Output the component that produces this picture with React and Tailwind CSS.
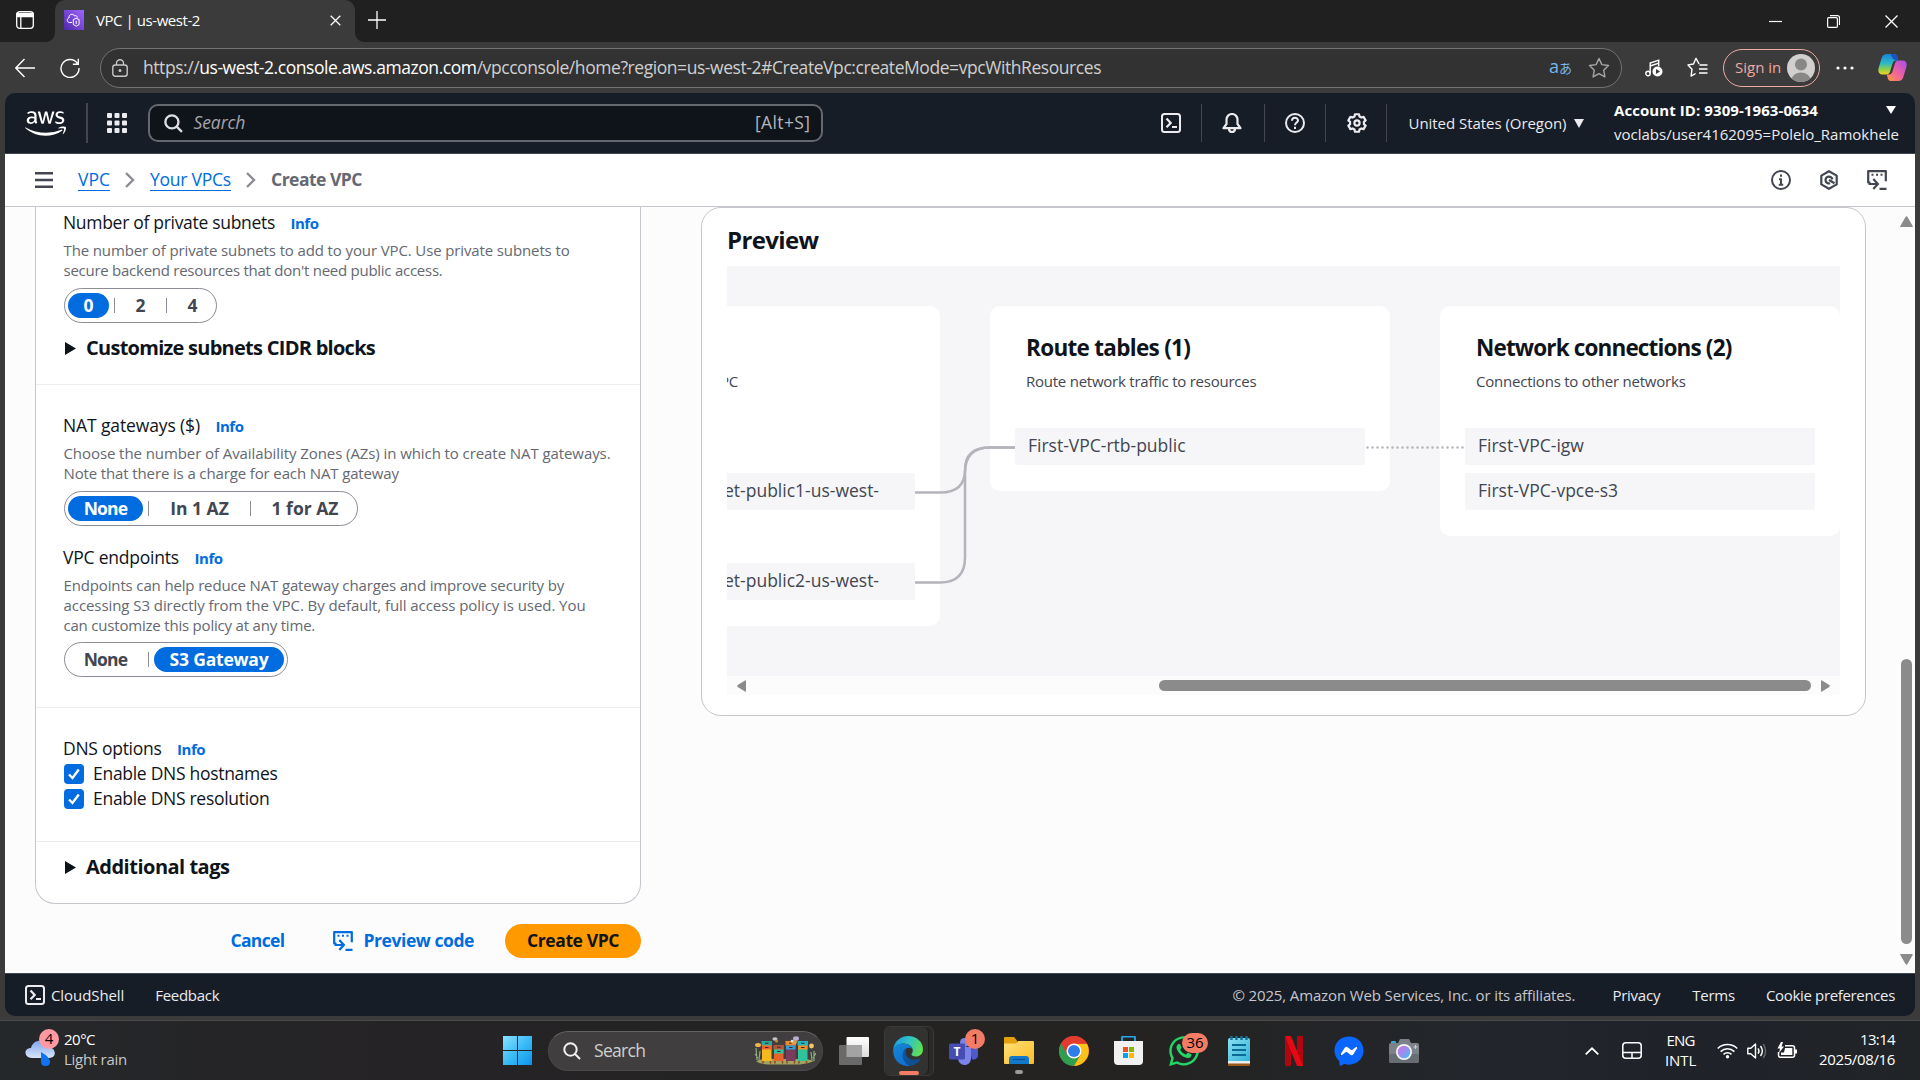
import { FaAws, FaWhatsapp, FaFacebookMessenger } from 'react-icons/fa';

/* ---------- shared icons ---------- */

function CodeDownIcon() {
  return (
    <svg width="20" height="20" viewBox="0 0 20 20" fill="none" stroke="currentColor" strokeWidth="2.2">
      <path d="M3.500 12.500H1.200V1.200h17.600v10" strokeLinejoin="round" />
      <path d="M4.500 4.800h2M9 4.800h2M13.500 4.800h2" strokeWidth="2" />
      <path d="M1.500 14h8.500M6.300 9l4.600 5-4.600 5M12.500 18.800h7" />
    </svg>
  );
}

function ShellIcon() {
  return (
    <svg width="20" height="20" viewBox="0 0 20 20" fill="none" stroke="currentColor" strokeWidth="2">
      <rect x="1" y="1" width="18" height="18" rx="2.5" />
      <path d="M5.500 5.500 9.700 10l-4.200 4.200M11 14h5" strokeWidth="2.200" />
    </svg>
  );
}

const GEAR = (() => {
  const pts = [];
  for (let k = 0; k < 6; k++) {
    const a = -90 + k * 60;
    [[-13, 9], [13, 9], [21, 7], [39, 7]].forEach(([d, r]) => {
      const t = ((a + d) * Math.PI) / 180;
      pts.push(`${(10 + r * Math.cos(t)).toFixed(2)} ${(10 + r * Math.sin(t)).toFixed(2)}`);
    });
  }
  return `M${pts.join('L')}Z`;
})();

function Magnifier({ size, width }) {
  return (
    <svg width={size} height={size} viewBox="0 0 18 18" fill="none" stroke="currentColor" strokeWidth={width}>
      <circle cx="7.500" cy="7.500" r="6.200" />
      <path d="m12 12 5 5" />
    </svg>
  );
}

/* ---------- browser chrome ---------- */

function TabStrip() {
  return (
    <div className="flex h-[42px] bg-[#202020] text-white">
      <div className="flex w-[55px] items-center pl-4 pb-[2px]">
        <svg width="18" height="18" viewBox="0 0 18 18" fill="none" stroke="#fff" strokeWidth="1.300">
          <rect x=".7" y=".7" width="16.600" height="16.600" rx="3" />
          <path d="M1 2.500h16v3H1z" fill="#fff" />
          <path d="M4.800 5v12" />
        </svg>
      </div>
      <div className="relative flex w-[300px] items-center rounded-t-[10px] bg-[#3b3b3b] pb-[2px] pl-[9px]">
        <svg className="absolute bottom-0 -left-[9px]" width="9" height="9"><path d="M9 0v9H0a9 9 0 0 0 9-9Z" fill="#3b3b3b" /></svg>
        <svg className="absolute bottom-0 -right-[9px]" width="9" height="9"><path d="M0 0v9h9a9 9 0 0 1-9-9Z" fill="#3b3b3b" /></svg>
        <svg width="20" height="20" viewBox="0 0 20 20" fill="none" stroke="#fff" strokeWidth="1">
          <defs><linearGradient id="vpc" x1="0" y1="1" x2="1" y2="0"><stop stopColor="#4d27aa" /><stop offset="1" stopColor="#a166ff" /></linearGradient></defs>
          <rect width="20" height="20" fill="url(#vpc)" stroke="none" />
          <path d="M8 12.500H5.200C2.700 12 2.600 8.500 5 8c-.4-4 4.200-5 5.500-2 1.700-1 2.900.2 2.600 1.800" />
          <path d="M9.300 9.500 12.200 8.300l2.900 1.200v5L12.200 16.200l-2.900-1.700zM12.200 10.800v3.200" />
        </svg>
        <span className="ml-3 w-[234px] text-[15px] leading-5 tracking-[-0.44px]">VPC | us-west-2</span>
        <svg width="11" height="11" viewBox="0 0 11 11" stroke="#fff" strokeWidth="1.300"><path d="m.7.7 9.600 9.600M10.300.7.700 10.300" /></svg>
      </div>
      <div className="flex flex-1 items-center pb-[2px] pl-[13px]">
        <svg width="18" height="18" viewBox="0 0 18 18" stroke="#fff" strokeWidth="1.300"><path d="M9 0v18M0 9h18" /></svg>
      </div>
      <div className="flex items-center gap-[45px] pr-[22px]">
        <svg width="13" height="13" viewBox="0 0 13 13" stroke="#fff" strokeWidth="1.200"><path d="M0 6.500h13" /></svg>
        <svg width="13" height="13" viewBox="0 0 13 13" fill="none" stroke="#fff" strokeWidth="1.200">
          <rect x=".6" y="2.600" width="9.800" height="9.800" rx="1.200" />
          <path d="M3 .6h7.500a2 2 0 0 1 2 2V10" />
        </svg>
        <svg width="13" height="13" viewBox="0 0 13 13" stroke="#fff" strokeWidth="1.300"><path d="m.5.5 12 12M12.500.5l-12 12" /></svg>
      </div>
    </div>
  );
}

function AddressBar() {
  return (
    <div className="flex h-[51px] items-center bg-[#3b3b3b] pl-[15px] pr-[13px] text-white">
      <svg width="20" height="20" viewBox="0 0 20 20" fill="none" stroke="#fff" strokeWidth="1.400"><path d="M20 10H1M9.500 1 .8 10l8.700 9" /></svg>
      <svg className="ml-[25px]" width="20" height="20" viewBox="0 0 20 20" fill="none" stroke="#fff" strokeWidth="1.400">
        <path d="M17.500 5.500A9 9 0 1 0 19 10M18.300.8v5.400h-5.400" />
      </svg>
      <div className="ml-5 flex h-10 w-[1522px] shrink-0 items-center rounded-full border border-[#737373] bg-[#323232] pl-[11px] pr-[11px]">
        <svg width="16" height="18" viewBox="0 0 16 18" fill="none" stroke="#c8c8c8" strokeWidth="1.400">
          <rect x=".8" y="6" width="14.400" height="11.200" rx="2.500" />
          <path d="M4.500 6V4.200a3.500 3.500 0 0 1 7 0V6" />
          <circle cx="8" cy="11.600" r=".8" fill="#c8c8c8" />
        </svg>
        <div className="-mt-px ml-[15px] flex-1 whitespace-nowrap text-[17.5px] leading-6 tracking-[-0.434px] text-[#cfcfcf]">
          https://<span className="text-white">us-west-2.console.aws.amazon.com</span>/vpcconsole/home?region=us-west-2#CreateVpc:createMode=vpcWithResources
        </div>
        <span className="-mt-px mr-[16px] flex items-baseline text-[18px] leading-6 text-[#76b9ed]">
          a<span className="font-['Noto_Sans_CJK_JP'] text-[13px]">あ</span>
        </span>
        <svg width="22" height="22" viewBox="0 0 22 22" fill="none" stroke="#a6a6a6" strokeWidth="1.400" strokeLinejoin="round">
          <path d="m11 1.500 2.900 6.100 6.600.9-4.800 4.700 1.200 6.700L11 16.700l-5.900 3.200 1.200-6.700L1.500 8.500l6.600-.9z" />
        </svg>
      </div>
      <svg className="ml-[23px]" width="18" height="18" viewBox="0 0 18 18" fill="none" stroke="#fff" strokeWidth="1.400">
        <circle cx="3" cy="14.500" r="2.200" />
        <path d="M5.200 14.500V4l8.500-2.800v6M5.200 7l8.500-2.800" />
        <circle cx="12.500" cy="12.500" r="5" fill="#fff" stroke="none" />
        <path d="m11 10 4 2.500-4 2.500z" fill="#3b3b3b" stroke="none" />
      </svg>
      <svg className="ml-[24px]" width="21" height="21" viewBox="0 0 21 21" fill="none" stroke="#fff" strokeWidth="1.400" strokeLinejoin="round">
        <path d="M12.500 6.500H11.800L9 1.300 6.500 7l-5.500.9 4 4.300-.9 6.900 4.500-2.600" />
        <path d="M12.500 8h8M12 12h8.500M12 16h8.500" />
      </svg>
      <div className="ml-[15px] flex h-[38px] w-[97px] shrink-0 items-center justify-between whitespace-nowrap rounded-full border-[1.5px] border-[#f0a8a2] pl-[11px] pr-1 text-[15px] text-[#f0a8a2]">
        Sign in
        <svg width="28" height="28" viewBox="0 0 28 28">
          <clipPath id="av"><circle cx="14" cy="14" r="14" /></clipPath>
          <g clipPath="url(#av)"><rect width="28" height="28" fill="#d2d0ce" /><circle cx="14" cy="10.500" r="6" fill="#8a8886" /><ellipse cx="14" cy="26" rx="9.500" ry="7.500" fill="#8a8886" /></g>
        </svg>
      </div>
      <svg className="ml-4" width="18" height="4" fill="#fff"><circle cx="2" cy="2" r="1.600" /><circle cx="9" cy="2" r="1.600" /><circle cx="16" cy="2" r="1.600" /></svg>
      <svg className="ml-6" width="29" height="27" viewBox="0 0 29 27">
        <defs>
          <linearGradient id="cpA" x1="0" y1="0" x2="0" y2="1"><stop stopColor="#1784d8" /><stop offset=".45" stopColor="#2bb8c8" /><stop offset=".75" stopColor="#8fd14a" /><stop offset="1" stopColor="#f4d125" /></linearGradient>
          <linearGradient id="cpB" x1="1" y1="0" x2="0" y2="1"><stop stopColor="#a04df0" /><stop offset=".5" stopColor="#ee5fa5" /><stop offset="1" stopColor="#ff9a3c" /></linearGradient>
        </defs>
        <path d="M9 0h7c2.500 0 3 2 3.600 4l.6 2.500h-2c-2.500 0-3.300 1.500-4 4l-2 6.500c-.6 2-1.500 3.500-4 3.500H4.500C1 20.500-.3 18 .6 14L3.500 4.500C4.300 1.500 6 0 9 0Z" fill="url(#cpA)" />
        <path d="M16 0c2.500 0 3 2 3.600 4l.6 2.500h-2L15 5 12.500 0z" fill="#1b53c4" />
        <path d="M20 27h-7c-2.500 0-3-2-3.600-4l-.6-2.500h2c2.500 0 3.300-1.500 4-4l2-6.500c.6-2 1.500-3.500 4-3.500h3.700c3.500 0 4.800 2.500 3.900 6.500L25.500 22.500c-.8 3-2.500 4.500-5.500 4.500Z" fill="url(#cpB)" />
      </svg>
    </div>
  );
}

/* ---------- AWS console ---------- */

function Rule() {
  return <div className="h-[38px] w-px bg-[#424650]" />;
}

function ConsoleHeader() {
  return (
    <div className="flex h-[61px] items-center border-b border-[#424650] bg-[#161d26] pl-5 pr-[14px] text-[#ebebf0]">
      <FaAws size={41} className="mt-px text-white" />
      <div className="ml-5 h-10 w-[1.5px] bg-[#424650]" />
      <svg className="ml-[19px]" width="20" height="20" fill="currentColor">
        {[0, 7.5, 15].map(y => [0, 7.5, 15].map(x => <rect key={`${x}-${y}`} x={x} y={y} width="5" height="5" rx="1" />))}
      </svg>
      <div className="ml-[21px] flex h-[38px] w-[675px] items-center justify-between rounded-[10px] border-2 border-[#656871] bg-[#0f141a] pl-[14px] pr-[10px] text-[17.5px] text-[#b4b4bb]">
        <div className="flex items-center gap-[11px]">
          <span className="text-[#dedee3]"><Magnifier size={19} width={2.2} /></span>
          <span className="-mt-px italic tracking-[-0.1px] text-[#a4a4ad]">Search</span>
        </div>
        <span className="-mt-px tracking-[0.4px]">[Alt+S]</span>
      </div>
      <div className="flex flex-1 items-center pl-[338px]">
        <ShellIcon />
        <div className="ml-5"><Rule /></div>
        <svg className="ml-5" width="20" height="20" viewBox="0 0 20 20" fill="none" stroke="currentColor" strokeWidth="2.200" strokeLinejoin="round">
          <path d="M1.500 15.200h17l-3-4.200V6.500a5 5 0 0 0-11 0V11z" />
          <path d="M7 15.500c0 4.700 6 4.700 6 0" />
        </svg>
        <div className="ml-[22px]"><Rule /></div>
        <svg className="ml-5" width="20" height="20" viewBox="0 0 20 20" fill="none" stroke="currentColor" strokeWidth="2">
          <circle cx="10" cy="10" r="9" />
          <path d="M7 7.800C7 3.800 13 4 13 7.500c0 2-3 2.200-3 4.700" />
          <path d="M10 13.800v2.200" />
        </svg>
        <div className="ml-5"><Rule /></div>
        <svg className="ml-[21px]" width="20" height="20" viewBox="0 0 20 20" fill="none" stroke="currentColor" strokeWidth="2.200" strokeLinejoin="round">
          <path d={GEAR} /><circle cx="10" cy="10" r="2.600" />
        </svg>
        <div className="ml-[19px]"><Rule /></div>
        <span className="ml-[22px] whitespace-nowrap text-[15px] tracking-[-0.042px]">United States (Oregon)</span>
        <svg className="ml-[7px]" width="10" height="9" fill="currentColor"><path d="M0 0h10L5 9z" /></svg>
      </div>
      <div className="-mt-[3px] w-[287px] text-[15px] leading-[24px] text-white">
        <div className="flex items-center justify-between pr-[5px]">
          <span className="font-bold tracking-[0.077px]">Account ID: 9309-1963-0634</span>
          <svg width="10" height="8" fill="currentColor"><path d="M0 0h10L5 8z" /></svg>
        </div>
        <div className="whitespace-nowrap text-[#ebebf0]">voclabs/user4162095=Polelo_Ramokhele</div>
      </div>
    </div>
  );
}

function Chevron() {
  return <svg width="10" height="16" viewBox="0 0 10 16" fill="none" stroke="#8c8c94" strokeWidth="2.400"><path d="m1 1 7 7-7 7" /></svg>;
}

function Breadcrumbs() {
  return (
    <div className="flex h-[53px] items-center border-b border-[#c6c6cd] bg-white pl-[30px] pr-[28px] text-[17.5px] text-[#424650]">
      <svg width="18" height="16" stroke="currentColor" strokeWidth="2.400"><path d="M0 1.200h18M0 8h18M0 14.800h18" /></svg>
      <div className="ml-[25px] flex flex-1 items-center gap-[15.5px] leading-[21px]">
        <span className="border-b border-[#006ce0] text-[#006ce0]">VPC</span>
        <Chevron />
        <span className="-ml-px border-b border-[#006ce0] tracking-[-0.23px] text-[#006ce0]">Your VPCs</span>
        <Chevron />
        <span className="-ml-px -mt-px font-bold tracking-[-0.5px] text-[#656871]">Create VPC</span>
      </div>
      <div className="flex items-center gap-7">
        <svg width="20" height="20" viewBox="0 0 20 20" fill="none" stroke="currentColor" strokeWidth="2">
          <circle cx="10" cy="10" r="9" /><path d="M10 8.500v6.500M8 9.300h2M7.800 14.700h4.400M10 4.600v2.200" />
        </svg>
        <svg width="20" height="20" viewBox="0 0 20 20" fill="none" stroke="currentColor" strokeWidth="2.200" strokeLinejoin="round">
          <path d="m10 1.200 7.700 4.400v8.800L10 18.800l-7.700-4.400V5.600z" />
          <path d="M11 13.200A3.400 3.400 0 1 1 13.300 9.500M10 10l5.500 3.200" />
        </svg>
        <CodeDownIcon />
      </div>
    </div>
  );
}

function Label({ children, className = '' }) {
  return (
    <div className="-ml-px flex h-6 items-center whitespace-nowrap pb-px text-[17.5px] text-[#0f141a]">
      <span className={className}>{children}</span>
      <span className="ml-[15.5px] mt-px text-[15px] font-bold tracking-[-0.48px] text-[#006ce0]">Info</span>
    </div>
  );
}

function Segments({ options, active, className = 'mt-2' }) {
  return (
    <div className={`${className} flex h-[35px] w-fit items-center rounded-full border border-[#8c8c94] px-[3px] text-[17.5px] font-bold leading-[24px] text-[#424650]`}>
      {options.map(([text, cls], i) => (
        <div key={text} className="flex items-center">
          {i > 0 && <div className="mx-[5px] h-[15px] w-px bg-[#8c8c94]" />}
          <div className={`h-[25px] rounded-full text-center ${cls} ${text === active ? 'bg-[#006ce0] text-white' : ''}`}>{text}</div>
        </div>
      ))}
    </div>
  );
}

function Disclosure({ children, className }) {
  return (
    <div className="flex h-6 items-center text-[20px] font-bold text-[#0f141a]">
      <svg className="ml-px" width="11" height="13" fill="currentColor"><path d="M0 0 11 6.500 0 13z" /></svg>
      <span className={`ml-[10px] whitespace-nowrap ${className}`}>{children}</span>
    </div>
  );
}

function Check({ children }) {
  return (
    <div className="flex h-[25px] items-center whitespace-nowrap text-[17.5px] text-[#0f141a]">
      <svg width="20" height="20" viewBox="0 0 20 20"><rect width="20" height="20" rx="4" fill="#006ce0" /><path d="m5 10.500 3.500 3.500 6.300-8.500" fill="none" stroke="#fff" strokeWidth="2.400" /></svg>
      <span className="ml-[9px] tracking-[-0.29px]">{children}</span>
    </div>
  );
}

function Form() {
  const help = '-ml-[0.5px] mt-[5px] whitespace-nowrap text-[15px] leading-5 text-[#656871]';
  return (
    <div className="ml-[30px] w-[606px] shrink-0">
      <div className="flex h-[697px] flex-col rounded-b-[20px] border border-t-0 border-[#c6c6cd] bg-white">
        <section className="h-[178px] border-b border-[#ebebf0] pl-7 pt-1">
          <Label className="tracking-[-0.303px]">Number of private subnets</Label>
          <div className={help}>
            <div className="tracking-[-0.122px]">The number of private subnets to add to your VPC. Use private subnets to</div>
            <div className="tracking-[-0.257px]">secure backend resources that don't need public access.</div>
          </div>
          <Segments options={[['0', 'w-[41px]'], ['2', 'w-[41px]'], ['4', 'w-[41px]']]} active="0" />
          <div className="mt-[13px]"><Disclosure className="tracking-[-0.733px]">Customize subnets CIDR blocks</Disclosure></div>
        </section>
        <section className="h-[323px] border-b border-[#ebebf0] pl-7 pt-[29px]">
          <Label className="tracking-[-0.124px]">NAT gateways ($)</Label>
          <div className={help}>
            <div className="tracking-[-0.079px]">Choose the number of Availability Zones (AZs) in which to create NAT gateways.</div>
            <div className="tracking-[-0.13px]">Note that there is a charge for each NAT gateway</div>
          </div>
          <Segments options={[['None', 'w-[75px] tracking-[-0.8px]'], ['In 1 AZ', 'w-[91px]'], ['1 for AZ', 'w-[98px]']]} active="None" />
          <div className="mt-5"><Label className="tracking-[-0.212px]">VPC endpoints</Label></div>
          <div className={help}>
            <div className="tracking-[-0.145px]">Endpoints can help reduce NAT gateway charges and improve security by</div>
            <div className="tracking-[-0.067px]">accessing S3 directly from the VPC. By default, full access policy is used. You</div>
            <div className="tracking-[-0.2px]">can customize this policy at any time.</div>
          </div>
          <Segments className="mt-[7px]" options={[['None', 'w-[75px] tracking-[-0.8px]'], ['S3 Gateway', 'w-[130px] tracking-[-0.2px]']]} active="S3 Gateway" />
        </section>
        <section className="h-[134px] border-b border-[#ebebf0] pl-7 pt-[29px]">
          <Label className="tracking-[-0.27px]">DNS options</Label>
          <Check>Enable DNS hostnames</Check>
          <Check>Enable DNS resolution</Check>
        </section>
        <section className="pl-7 pt-[13px]">
          <Disclosure className="tracking-[-0.5px]">Additional tags</Disclosure>
        </section>
      </div>
      <div className="mt-5 flex h-[34px] items-center justify-end whitespace-nowrap text-[17.5px] font-bold text-[#006ce0]">
        <span className="-mt-px tracking-[-0.65px]">Cancel</span>
        <span className="ml-[49px]"><CodeDownIcon /></span>
        <span className="-mt-px ml-[10px] tracking-[-0.43px]">Preview code</span>
        <span className="ml-[31px] h-[34px] w-[136px] rounded-full bg-[#ff9900] text-center leading-[33px] tracking-[-0.4px] text-[#0f141a]">Create VPC</span>
      </div>
    </div>
  );
}

function Resource({ children, className = '' }) {
  return <div className={`mx-[25px] h-[37px] whitespace-nowrap rounded-[2px] bg-[#f6f6f9] px-[13px] text-[17.5px] leading-[35px] text-[#424650] ${className}`}>{children}</div>;
}

function Column({ title, note, titleClass, noteClass, children, className }) {
  return (
    <div className={`w-[400px] shrink-0 rounded-[10px] bg-white pt-[26px] ${className}`}>
      <div className={`ml-9 h-[30px] text-[22.5px] font-bold leading-[31px] text-[#0f141a] ${titleClass}`}>{title}</div>
      <div className={`ml-9 mt-[10px] h-5 text-[15px] leading-[18px] text-[#424650] ${noteClass}`}>{note}</div>
      <div className="mt-9 flex flex-col gap-2">{children}</div>
    </div>
  );
}

function Preview() {
  return (
    <div className="ml-[60px] h-[509px] w-[1165px] shrink-0 rounded-[20px] border border-[#c6c6cd] bg-white pl-[25px] pr-[25px]">
      <div className="h-[58px] pt-[15px] text-[24px] font-bold leading-[34px] tracking-[-0.65px] text-[#0f141a]">Preview</div>
      <div className="relative h-[410px] overflow-hidden bg-[#f6f6f9] pt-10">
        <div className="-ml-[187px] flex items-start gap-[50px]">
          <Column className="h-[320px]" note="VPC" noteClass="w-[162px] text-right tracking-[-0.25px]">
            <div className="h-[37px]" />
            <Resource className="pr-9 text-right">et-public1-us-west-</Resource>
            <div className="h-[37px]" />
            <Resource className="pr-9 text-right">et-public2-us-west-</Resource>
          </Column>
          <Column className="h-[185px]" title="Route tables (1)" titleClass="tracking-[-0.7px]" note="Route network traffic to resources" noteClass="tracking-[-0.24px]">
            <Resource>First-VPC-rtb-public</Resource>
          </Column>
          <Column className="h-[230px]" title="Network connections (2)" titleClass="tracking-[-0.85px]" note="Connections to other networks" noteClass="tracking-[-0.22px]">
            <Resource>First-VPC-igw</Resource>
            <Resource>First-VPC-vpce-s3</Resource>
          </Column>
        </div>
        <svg className="absolute left-0 top-0" width="1113" height="410" fill="none" stroke="#b4b4bb" strokeWidth="2.500">
          <path d="M188 226.500h25q25 0 25-22.500t25-22.500h25" />
          <path d="M188 316.500h25q25 0 25-25v-85q0-25 25-25h25" />
          <path d="M640.500 181.500H738" strokeDasharray="0 5" strokeLinecap="round" />
        </svg>
      </div>
      <div className="flex h-[19px] items-center bg-[#fcfcfc] px-[10px]">
        <svg width="9" height="12" fill="#8b8b8b"><path d="M9 1v10q0 1-1 .6L.7 7Q-.2 6 .7 5L8 .4Q9 0 9 1Z" /></svg>
        <div className="ml-[413px] h-[11px] w-[652px] rounded-full bg-[#8b8b8b]" />
        <svg className="ml-[10px]" width="9" height="12" fill="#8b8b8b"><path d="M0 1v10q0 1 1 .6L8.300 7q.9-1 0-2L1 .4Q0 0 0 1Z" /></svg>
      </div>
    </div>
  );
}

function ConsoleFooter() {
  return (
    <div className="flex h-[43px] items-center whitespace-nowrap border-t border-[#424650] bg-[#161d26] pb-px pl-5 pr-5 text-[15px] leading-5 text-[#ebebf0]">
      <span className="mt-px"><ShellIcon /></span>
      <span className="ml-[6px] tracking-[-0.08px]">CloudShell</span>
      <span className="ml-[31px] flex-1 tracking-[-0.293px]">Feedback</span>
      <span className="tracking-[-0.132px] text-[#c6c6cd]">© 2025, Amazon Web Services, Inc. or its affiliates.</span>
      <span className="ml-[37px] tracking-[-0.25px]">Privacy</span>
      <span className="ml-8 tracking-[-0.2px]">Terms</span>
      <span className="ml-[31px] tracking-[-0.344px]">Cookie preferences</span>
    </div>
  );
}

/* ---------- Windows taskbar ---------- */

function Hives() {
  const hives = [[8, 4, '#2aa5a0', '#f0622d', '#f6b81f'], [20, 8, '#b0563c', '#2ec4a0', '#e8632a'], [32, 4, '#f08a2a', '#38a0d0', '#7a3b5e'], [44, 4, '#26b5c4', '#f28c28', '#2fc39b']];
  return (
    <svg width="62" height="30" viewBox="0 0 62 30">
      <path d="M2 25q8-3 20-2h24q10 0 14 2-6 3-14 3.500H14Q5 28 2 25Z" fill="#a3a35f" />
      <path d="M3 24 2 12M5 24l1-9M58 24l-1-8M60 25V15M4 22l-3-4M59 22l3-5" stroke="#8fae7a" strokeWidth="1.200" />
      <ellipse cx="4" cy="9" rx="3" ry="2" fill="#f0b44a" /><circle cx="57.500" cy="10" r="2.400" fill="#f5c86a" />
      {hives.map(([x, y, a, b, c]) => (
        <g key={x}>
          <rect x={x} y={y + 2} width="9.500" height={23 - y} fill={c} />
          <rect x={x - 0.5} y={y + 1} width="10.500" height="4.500" fill={a} />
          <rect x={x} y={y + 5.5} width="9.500" height="4" fill={b} />
          <path d={`M${x + 3} ${y + 3.2}h3.5M${x + 3} ${y + 7.5}h3.5`} stroke="#3b2b20" strokeWidth="1" />
          <path d={`M${x + 1} 25v2.5M${x + 8.5} 25v2.5`} stroke="#8a4b22" strokeWidth="1.500" />
        </g>
      ))}
      <ellipse cx="21" cy="3" rx="2.600" ry="1.700" fill="#c9c6cc" /><circle cx="22.500" cy="5" r="1.500" fill="#c98b3a" />
      <ellipse cx="42" cy="2.500" rx="3" ry="2.300" fill="#b9aed2" /><ellipse cx="40" cy="6" rx="3" ry="2" fill="#e0a04a" /><circle cx="38" cy="5" r="1.300" fill="#e9e4ef" />
    </svg>
  );
}

function EdgeIcon() {
  return (
    <svg width="30" height="30" viewBox="0 0 30 30">
      <defs>
        <linearGradient id="eg1" x1="0" y1=".3" x2="1" y2=".6"><stop stopColor="#1d9ddb" /><stop offset=".45" stopColor="#30c2c9" /><stop offset="1" stopColor="#62e04c" /></linearGradient>
        <linearGradient id="eg2" x1="0" y1="0" x2=".6" y2="1"><stop stopColor="#1587d6" /><stop offset="1" stopColor="#0f6fd0" /></linearGradient>
        <linearGradient id="eg3" x1="0" y1="0" x2="1" y2="1"><stop stopColor="#0c59a4" /><stop offset="1" stopColor="#114a8b" /></linearGradient>
      </defs>
      <path d="M.3 13C1.200 5.500 7.500 0 15 0c8.500 0 15 6 15 13.200 0 5-3.600 7.300-7 7.300-3.200 0-4.600-1.300-4.600-2.200 0-.8 1.400-1.200 1.400-3.800C19.800 10.500 15.500 7.500 10.500 7.500 6 7.500 2 10 .3 13Z" fill="url(#eg1)" />
      <path d="M.3 13C1.500 9.500 5.500 7.300 10.500 7.500c4.500.2 8 2.500 9 5.300C17 11 12.500 11.500 10.800 15c-2 5 .8 12 6.700 14.800C8 31.500-1 24 .3 13Z" fill="url(#eg2)" />
      <path d="M13.500 12.600C9 15.500 8.500 21 11.500 25.500c2 3 4.800 4.200 6.800 4.200 3.800-.6 7.200-3 9.200-6.200.4-.7 0-1-.6-.7C21 25.500 13 23 12.800 16.500c0-1.600.2-2.800.7-3.900Z" fill="url(#eg3)" />
    </svg>
  );
}

function TeamsIcon() {
  return (
    <svg width="30" height="28" viewBox="0 0 30 28">
      <circle cx="15.500" cy="5.500" r="4.500" fill="#7b83eb" />
      <path d="M20 10h9v8c0 3.500-3 5-6 4.500z" fill="#5059c9" />
      <path d="M9 10h13v11c0 4.500-3 7-6.500 7S9 25 9 21z" fill="#7b83eb" />
      <rect y="6.500" width="16" height="16" rx="1.500" fill="#454db3" />
      <text x="8" y="19" textAnchor="middle" fontSize="12" fontWeight="700" fill="#fff">T</text>
    </svg>
  );
}

function ChromeIcon() {
  return (
    <svg width="30" height="30" viewBox="0 0 30 30">
      <circle cx="15" cy="15" r="15" fill="#ea4335" />
      <path d="M2 7.500A15 15 0 0 0 15 30l6.500-11.500L15 15Z" fill="#2f9e4f" />
      <path d="M15 30A15 15 0 0 0 28 7.800H15L21.500 19Z" fill="#fbc116" />
      <path d="M2 7.500 8.500 18.700 15 15V7.800H28A15 15 0 0 0 2 7.500Z" fill="#e33b2e" />
      <circle cx="15" cy="15" r="7.500" fill="#fff" /><circle cx="15" cy="15" r="6" fill="#2f7de9" />
    </svg>
  );
}

function Badge({ children, className }) {
  return <span className={`absolute h-5 rounded-full text-center text-[15px] leading-[19px] text-black ${className}`}>{children}</span>;
}

function Taskbar() {
  return (
    <div className="flex h-[60px] items-center border-t border-[#4b4b4b] bg-[linear-gradient(90deg,#25282a,#252326_20%,#242322_45%,#242322_60%,#23262b_76%,#20222a_88%,#212427)] text-white">
      <div className="relative ml-[25px] flex w-[478px] items-center">
        <svg className="mt-1" width="30" height="28" viewBox="0 0 30 28">
          <defs><linearGradient id="cl" x1="0" y1="0" x2="0" y2="1"><stop stopColor="#7ea6ee" /><stop offset="1" stopColor="#d9e5fa" /></linearGradient></defs>
          <path d="M7 19C-1 19-2 9 6 9 8 0 20-1 22 8c9-1 11 11 2 11Z" fill="url(#cl)" />
          <path d="M16 13q9 5 9 10 0 4-4.500 4T16 23Z" fill="#1273f0" />
        </svg>
        <Badge className="-top-[3px] left-[14px] w-5 bg-[#ff99a4]">4</Badge>
        <div className="-mt-[3px] ml-[9px] text-[15px] leading-5">
          <div className="tracking-[-0.5px]">20°C</div>
          <div className="tracking-[-0.265px] text-[#c8c8c8]">Light rain</div>
        </div>
      </div>
      <svg width="29" height="29" viewBox="0 0 29 29">
        <defs><linearGradient id="win" x1="0" y1="0" x2="1" y2="1"><stop stopColor="#8ae2ff" /><stop offset=".5" stopColor="#3cbcf5" /><stop offset="1" stopColor="#0a93ee" /></linearGradient></defs>
        <path d="M0 0h14v14H0zM15 0h14v14H15zM0 15h14v14H0zM15 15h14v14H15z" fill="url(#win)" />
      </svg>
      <div className="ml-4 flex h-10 w-[275px] items-center rounded-full border border-[#4a4949] border-t-[#646363] bg-[#403e3e] pl-[14px] pr-1.5 text-[17.5px] text-[#d0d0d0]">
        <span className="text-[#f2f2f2]"><Magnifier size={18} width={2} /></span>
        <span className="ml-[13px] flex-1 tracking-[-0.7px]">Search</span>
        <Hives />
      </div>
      <svg className="ml-4" width="30" height="28" viewBox="0 0 30 28">
        <defs><linearGradient id="tv" x1="0" y1="0" x2="0" y2="1"><stop stopColor="#fff" /><stop offset="1" stopColor="#dcdcdc" /></linearGradient></defs>
        <rect x="7.500" width="22.500" height="20" rx="1" fill="url(#tv)" />
        <path d="M0 9q0-1 1-1h21q1 0 1 1v18q0 1-1 1H1q-1 0-1-1Z" fill="#6a6a6a" />
        <path d="M7.500 8H22q1 0 1 1v11H7.500Z" fill="#a3a3a3" />
      </svg>
      <div className="ml-[15px] flex h-[50px] w-[50px] rounded-[6px] border border-[#3a3a39] bg-[#292928]">
        <div className="relative flex h-[48px] w-11 flex-col items-center rounded-[6px] border-r border-[#1c1c1b] bg-[#323231] pl-[2px] pt-[9px]">
          <EdgeIcon />
          <div className="absolute bottom-0 left-[14px] h-1 w-5 rounded-full bg-[#f47c64]" />
        </div>
      </div>
      <div className="relative ml-[15px]"><TeamsIcon /><Badge className="-right-[6px] -top-2 w-5 bg-[#f47c64]">1</Badge></div>
      <div className="relative ml-[25px]">
        <svg width="30" height="27" viewBox="0 0 30 27">
          <defs><linearGradient id="fd" x1="0" y1="0" x2="1" y2="1"><stop stopColor="#ffe07a" /><stop offset="1" stopColor="#fdbd23" /></linearGradient></defs>
          <path d="M0 1q0-1 1-1h9l3 3.500V9H0Z" fill="#e5a00d" />
          <path d="M0 6.500h12l2-2.500h15q1 0 1 1v21q0 1-1 1H1q-1 0-1-1Z" fill="url(#fd)" />
          <path d="M5 27v-5q0-3 3-3h14q3 0 3 3v5Z" fill="#1278cc" /><path d="M9 22.500h12" stroke="#0a4f92" strokeWidth="1.200" />
        </svg>
        <div className="absolute -bottom-[10px] left-[11px] h-1 w-2 rounded-full bg-[#9a9a9a]" />
      </div>
      <div className="ml-[25px]"><ChromeIcon /></div>
      <svg className="ml-[25px]" width="29" height="29" viewBox="0 0 29 29">
        <path d="M8 6V1.500q0-.8.800-.8h11.400q.8 0 .8.800V6" fill="none" stroke="#28a8ea" strokeWidth="1.800" />
        <path d="M0 5h29v20q0 4-4 4H4q-4 0-4-4Z" fill="#f1f1f1" />
        <path d="M9 11h5v5H9z" fill="#f25022" /><path d="M15 11h5v5h-5z" fill="#7fba00" /><path d="M9 17h5v5H9z" fill="#00a4ef" /><path d="M15 17h5v5h-5z" fill="#ffb900" />
      </svg>
      <div className="relative ml-[24px]"><FaWhatsapp size={34} className="text-[#25d366]" /><Badge className="-right-[7px] -top-px w-[26px] bg-[#f47c64]">36</Badge></div>
      <svg className="ml-[27px]" width="22" height="30" viewBox="0 0 22 30">
        <defs><linearGradient id="np" x1="0" y1="0" x2="1" y2="1"><stop stopColor="#8be0f2" /><stop offset="1" stopColor="#35b3d8" /></linearGradient></defs>
        <rect y="25" width="22" height="5" rx="1" fill="#9a5a1c" /><rect y="24" width="22" height="3.500" fill="#eee" />
        <path d="M0 4q0-2 2-2h18q2 0 2 2v21H0Z" fill="url(#np)" />
        <path d="M4 9h14M4 14h14M4 19h14" stroke="#0b6a94" strokeWidth="1.800" />
        <path d="M3.500 0v4M8.500 0v4M13.500 0v4M18.500 0v4" stroke="#136f96" strokeWidth="2.400" />
      </svg>
      <svg className="ml-[35px]" width="18" height="30" viewBox="0 0 18 30">
        <path d="M0 0h6v30H0zM12 0h6v30h-6z" fill="#b1060f" /><path d="M0 0h6l12 30h-6z" fill="#e50914" />
      </svg>
      <div className="relative ml-[31px]">
        <div className="absolute inset-[6px] rounded-full bg-white" />
        <FaFacebookMessenger size={30} className="relative text-[#0a66ff]" />
      </div>
      <svg className="ml-[25px]" width="30" height="24" viewBox="0 0 30 24">
        <defs><linearGradient id="lens" x1="0" y1="0" x2="1" y2="1"><stop stopColor="#d070d8" /><stop offset=".5" stopColor="#9a8ff0" /><stop offset="1" stopColor="#34c6f0" /></linearGradient></defs>
        <rect x="2" y="2" width="5" height="4" rx="1" fill="#35a7dd" />
        <path d="M0 6q0-2 2-2h7l2-4h9l2 4h6q2 0 2 2v16q0 2-2 2H2q-2 0-2-2Z" fill="#7c8288" />
        <path d="M0 15h30v7q0 2-2 2H2q-2 0-2-2Z" fill="#676d73" />
        <circle cx="15" cy="13" r="8" fill="#f3f4f6" /><circle cx="15" cy="13" r="6.300" fill="url(#lens)" />
        <path d="M26.500 6v4M24.500 8h4" stroke="#c9d0d6" strokeWidth="1" />
      </svg>
      <div className="flex flex-1 items-center justify-end pr-[25px] text-[15px] leading-5">
        <svg width="14" height="8" viewBox="0 0 14 8" fill="none" stroke="#fff" strokeWidth="1.800"><path d="m.7 7.300 6.300-6 6.300 6" /></svg>
        <svg className="ml-[23px]" width="20" height="17" viewBox="0 0 20 17" fill="none" stroke="#fff" strokeWidth="1.500"><rect x=".8" y=".8" width="18.400" height="15.400" rx="3" /><path d="M1 10.500h18M10 10.500V16" /></svg>
        <div className="-mt-[2px] ml-[23px] w-[31px] text-center"><div className="tracking-[-0.84px]">ENG</div><div className="tracking-[-0.1px]">INTL</div></div>
        <svg className="ml-[21px]" width="21" height="16" viewBox="0 0 21 16" fill="none" stroke="#fff" strokeWidth="1.500">
          <path d="M.8 5.500a13.800 13.800 0 0 1 19.400 0M3.600 8.600a9.800 9.800 0 0 1 13.800 0M6.500 11.400a5.700 5.700 0 0 1 8 0" /><circle cx="10.500" cy="13.800" r="1.700" fill="#fff" stroke="none" />
        </svg>
        <svg className="ml-[9px]" width="20" height="16" viewBox="0 0 20 16" fill="none" stroke="#fff" strokeWidth="1.400">
          <path d="M.8 5.300h3L8.500 1v14l-4.700-4.300h-3Z" strokeLinejoin="round" /><path d="M11 5.300q2 2.700 0 5.400M13.500 3q3.700 5 0 10" /><path d="M16.300 1q4.500 7 0 14" stroke="#666" />
        </svg>
        <svg className="ml-[10px]" width="21" height="17" viewBox="0 0 21 17" fill="none" stroke="#fff" strokeWidth="1.500">
          <path d="M8 3.800h7.500q2 0 2 2v7.500q0 2-2 2H3.500q-2 0-2-2V10" /><path d="M8 6h7.300v7H4v-2.500h3z" fill="#fff" stroke="none" /><path d="M18 7.500h2v4h-2z" fill="#fff" stroke="none" />
          <path d="M4 0 .5 6.500H3L2 11l5-6.500H4.500L6 0Z" fill="#fff" stroke="none" />
        </svg>
        <div className="-mt-[3px] ml-[17px] w-[80px] text-right"><div className="tracking-[-0.65px]">13:14</div><div className="tracking-[-0.361px]">2025/08/16</div></div>
      </div>
    </div>
  );
}

export default function App() {
  return (
    <div className="h-[1080px] w-[1920px] overflow-hidden bg-[#3b3b3b] font-['Open_Sans','Noto_Sans',sans-serif]">
      <TabStrip />
      <AddressBar />
      <div className="mx-[5px] mb-1 h-[923px] overflow-hidden rounded-[10px]">
        <ConsoleHeader />
        <Breadcrumbs />
        <div className="flex h-[766px] bg-[#fcfcfd]">
          <Form />
          <Preview />
          <div className="ml-auto flex w-[18px] flex-col items-center pt-[9px]">
            <svg width="13" height="11" fill="#8b8b8b"><path d="M1 11h11q1.200 0 .7-1L7.500 1Q6.500-.4 5.500 1L.3 10q-.5 1 .7 1Z" /></svg>
            <div className="mt-[432px] h-[285px] w-[11px] rounded-full bg-[#8b8b8b]" />
            <svg className="mt-[10px]" width="13" height="11" fill="#8b8b8b"><path d="M1 0h11q1.200 0 .7 1L7.500 10q-1 1.400-2 0L.3 1Q-.2 0 1 0Z" /></svg>
          </div>
        </div>
        <ConsoleFooter />
      </div>
      <Taskbar />
    </div>
  );
}
